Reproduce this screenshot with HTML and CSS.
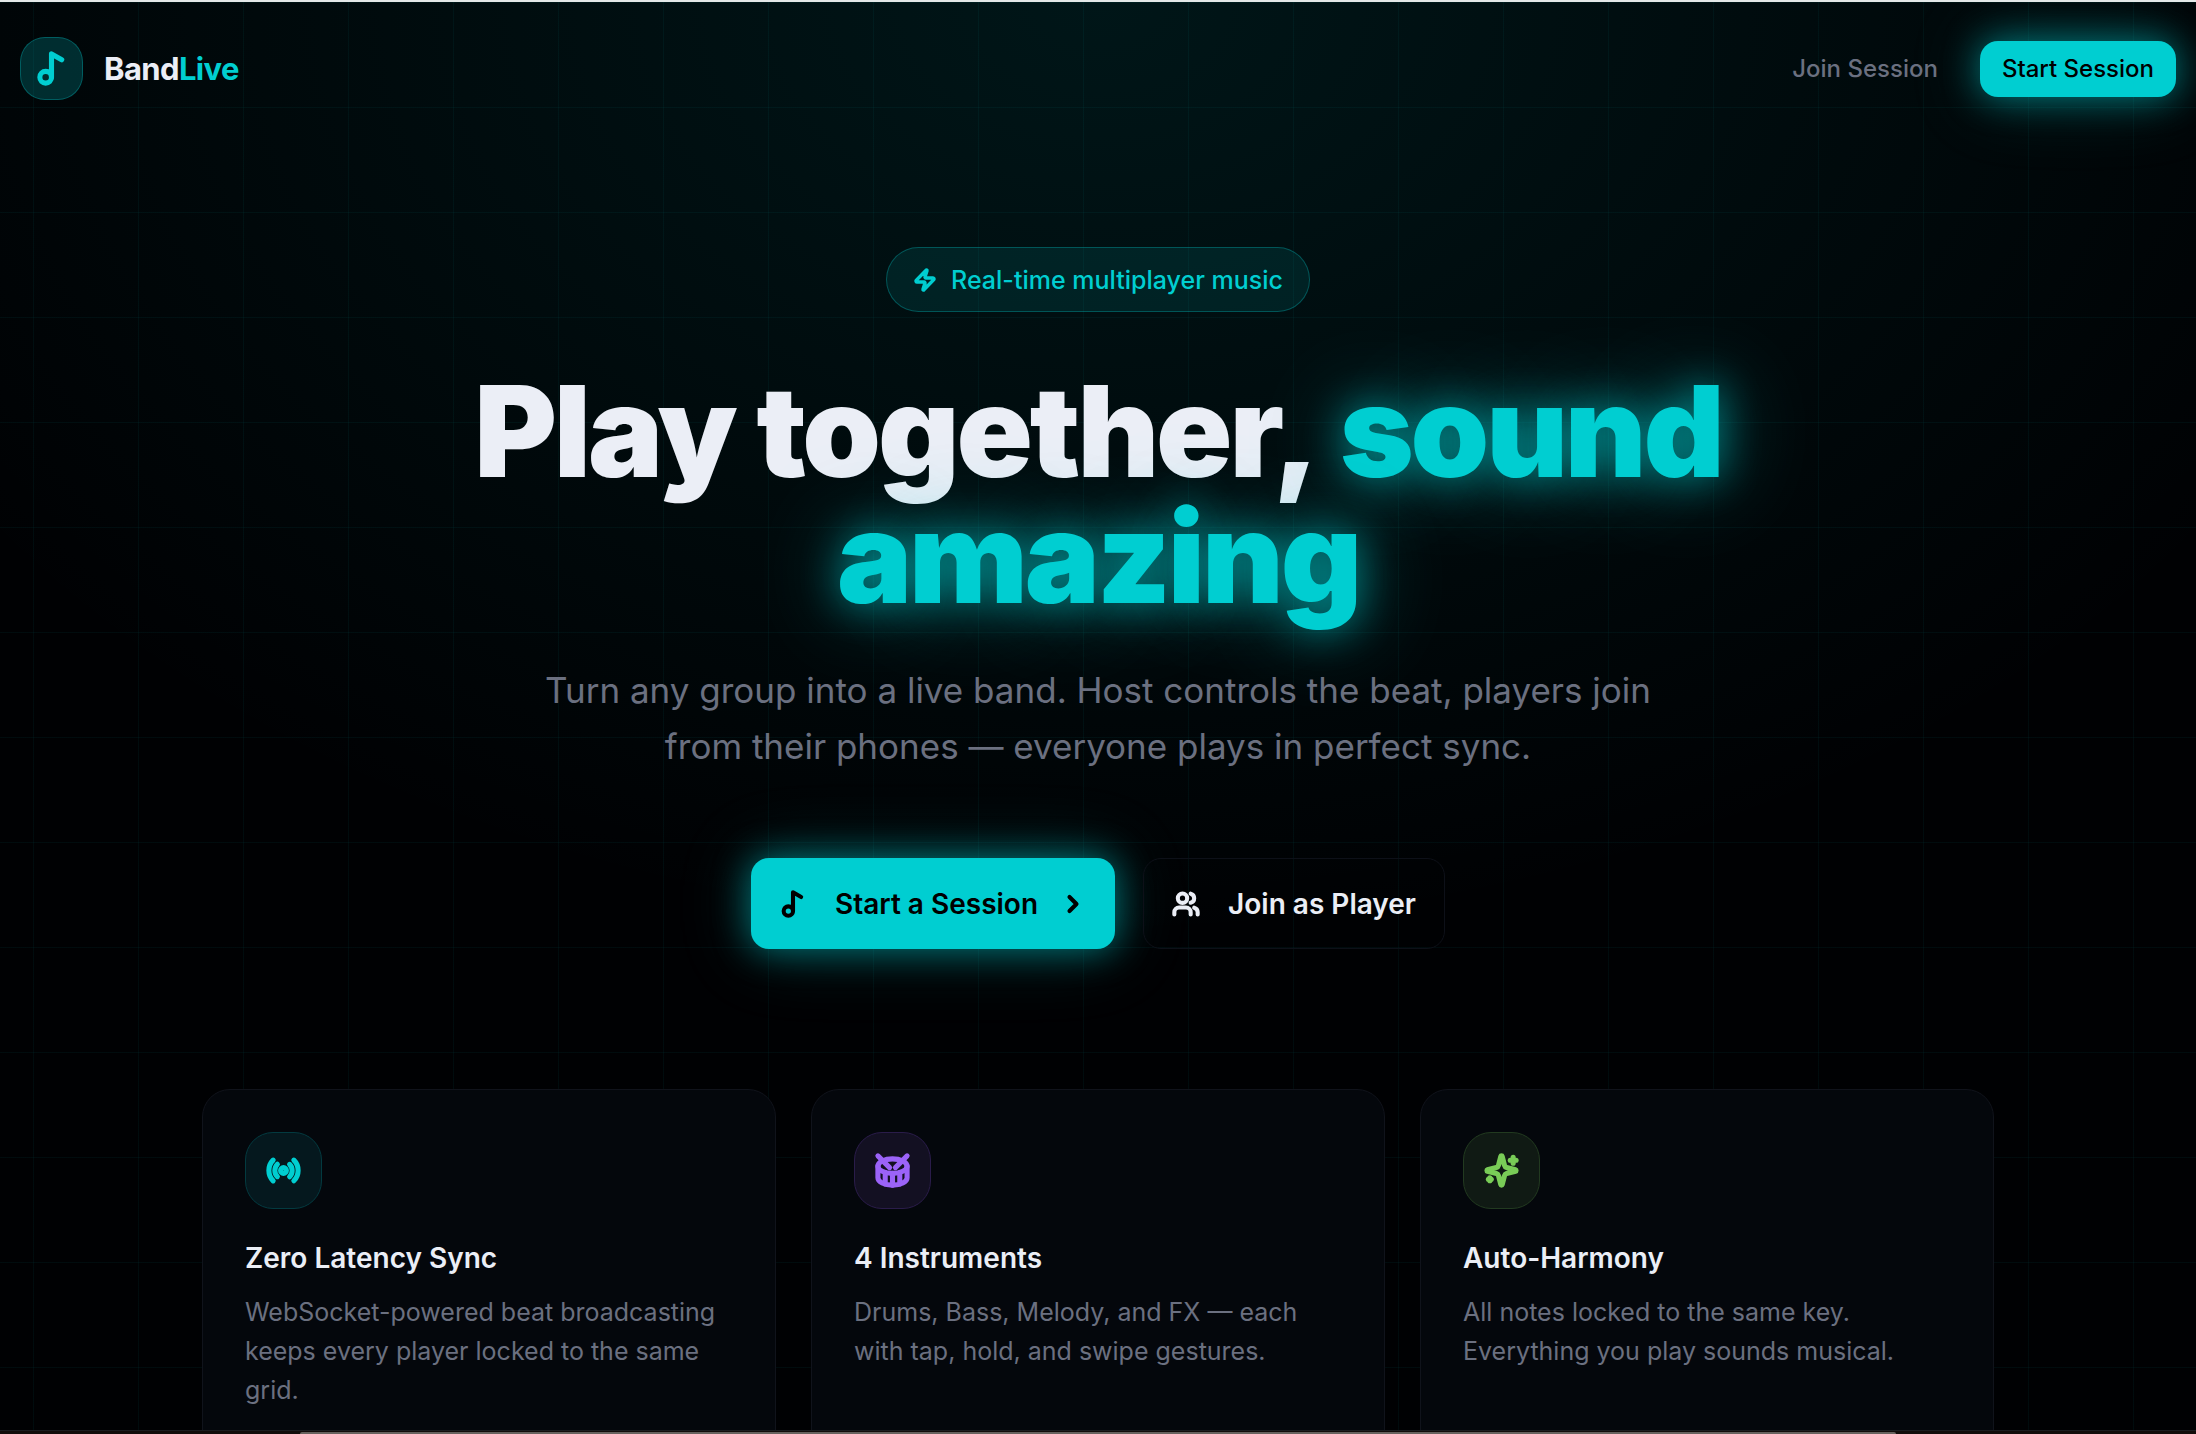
FILE: index.html
```html
<!DOCTYPE html>
<html lang="en">
<head>
<meta charset="utf-8">
<meta name="viewport" content="width=device-width, initial-scale=1">
<title>BandLive</title>
<link rel="stylesheet" href="styles.css">
</head>
<body>
<div class="page">
  <div class="screen">
    <header class="topbar">
      <a class="brand" href="#">
        <span class="brand-mark"><svg class="icon icon-lg" viewBox="0 0 24 24"><circle cx="8" cy="18" r="4"/><path d="M12 18V2l7 4"/></svg></span>
        <span class="brand-name">Band<span class="accent">Live</span></span>
      </a>
      <nav class="topnav">
        <a class="nav-link" href="#">Join Session</a>
        <button class="btn-small" type="button">Start Session</button>
      </nav>
    </header>
    <main>
      <section class="hero">
        <p class="badge"><svg class="icon icon-sm" viewBox="0 0 24 24"><path d="M4 14a1 1 0 0 1-.78-1.63l9.9-10.2a.5.5 0 0 1 .86.46l-1.92 6.02A1 1 0 0 0 13 10h7a1 1 0 0 1 .78 1.63l-9.9 10.2a.5.5 0 0 1-.86-.46l1.92-6.02A1 1 0 0 0 11 14z"/></svg>Real-time multiplayer music</p>
        <h1 class="headline">Play together, <span class="glow">sound amazing</span></h1>
        <p class="lead">Turn any group into a live band. Host controls the beat, players join from their phones — everyone plays in perfect sync.</p>
        <div class="actions">
          <button class="btn btn-primary" type="button"><svg class="icon icon-md" viewBox="0 0 24 24"><circle cx="8" cy="18" r="4"/><path d="M12 18V2l7 4"/></svg><span class="btn-label">Start a Session</span><svg class="icon icon-md" viewBox="0 0 24 24"><path d="m9 18 6-6-6-6"/></svg></button>
          <button class="btn btn-outline" type="button"><svg class="icon icon-md" viewBox="0 0 24 24"><path d="M16 21v-2a4 4 0 0 0-4-4H6a4 4 0 0 0-4 4v2"/><circle cx="9" cy="7" r="4"/><path d="M22 21v-2a4 4 0 0 0-3-3.870"/><path d="M16 3.130a4 4 0 0 1 0 7.750"/></svg><span class="btn-label">Join as Player</span></button>
        </div>
      </section>
      <section class="features">
        <article class="card">
          <span class="tile tile-cyan"><svg class="icon icon-lg" viewBox="0 0 24 24"><path d="M4.900 19.100C1 15.200 1 8.800 4.900 4.900"/><path d="M7.800 16.200c-2.300-2.300-2.300-6.100 0-8.500"/><circle cx="12" cy="12" r="2"/><path d="M16.200 7.800c2.300 2.300 2.300 6.100 0 8.500"/><path d="M19.100 4.900C23 8.800 23 15.100 19.100 19"/></svg></span>
          <h2 class="card-title">Zero Latency Sync</h2>
          <p class="card-text">WebSocket-powered beat broadcasting keeps every player locked to the same grid.</p>
        </article>
        <article class="card">
          <span class="tile tile-violet"><svg class="icon icon-lg" viewBox="0 0 24 24"><path d="m2 2 8 8"/><path d="m22 2-8 8"/><ellipse cx="12" cy="9" rx="10" ry="5"/><path d="M7 13.400v7.900"/><path d="M12 14v8"/><path d="M17 13.400v7.900"/><path d="M2 9v8a10 5 0 0 0 20 0V9"/></svg></span>
          <h2 class="card-title">4 Instruments</h2>
          <p class="card-text">Drums, Bass, Melody, and FX — each with tap, hold, and swipe gestures.</p>
        </article>
        <article class="card">
          <span class="tile tile-green"><svg class="icon icon-lg" viewBox="0 0 24 24"><path d="M9.937 15.500A2 2 0 0 0 8.500 14.063l-6.135-1.582a.5.5 0 0 1 0-.962L8.500 9.936A2 2 0 0 0 9.937 8.500l1.582-6.135a.5.5 0 0 1 .963 0L14.063 8.500A2 2 0 0 0 15.500 9.937l6.135 1.581a.5.5 0 0 1 0 .964L15.500 14.063a2 2 0 0 0-1.437 1.437l-1.582 6.135a.5.5 0 0 1-.963 0z"/><path d="M20 3v4"/><path d="M22 5h-4"/><path d="M4 17v2"/><path d="M5 18H3"/></svg></span>
          <h2 class="card-title">Auto-Harmony</h2>
          <p class="card-text">All notes locked to the same key. Everything you play sounds musical.</p>
        </article>
      </section>
    </main>
  </div>
  <div class="edge"><div class="edge-line"></div></div>
</div>
</body>
</html>
```
FILE: styles.css
```css
* { box-sizing: border-box; }

html, body { margin: 0; height: 100%; background: #000; }

body {
  font-family: Inter, "Liberation Sans", sans-serif;
  color: #ebeef6;
  overflow: hidden;
}

h1, h2, p { margin: 0; }
a { color: inherit; text-decoration: none; }
button { font: inherit; border: 0; }

.page {
  display: flex;
  flex-direction: column;
  height: 100vh;
  border-top: 2px solid #e4e8e8;
}
.screen {
  flex: 1;
  min-height: 0;
  overflow: hidden;
  background-color: #000103;
  background-image:
    linear-gradient(rgba(0, 206, 209, 0.050) 1px, transparent 1px),
    linear-gradient(90deg, rgba(0, 206, 209, 0.050) 1px, transparent 1px),
    radial-gradient(ellipse 62% 66% at 50% 0, rgba(0, 206, 209, 0.100), transparent);
  background-size: 105px 105px, 105px 105px, auto;
  background-position: 33px 0, 33px 0, 0 0;
}
.edge {
  height: 4px;
  padding: 1px 300px 0;
  border-top: 1px solid #1b1d20;
  background: #120d0b;
}
.edge-line { height: 2px; background: #67625e; border-radius: 2px 2px 0 0; }

.icon {
  flex: none;
  fill: none;
  stroke: currentColor;
  stroke-width: 3.5;
  stroke-linecap: round;
  stroke-linejoin: round;
  overflow: visible;
}
.icon-sm { width: 24px; height: 24px; }
.icon-md { width: 28px; height: 28px; }
.icon-lg { width: 35px; height: 35px; }

.topbar {
  display: flex;
  align-items: center;
  justify-content: space-between;
  padding: 35px 20px;
}
.brand { display: flex; align-items: center; gap: 21px; }
.brand-mark {
  display: grid;
  place-items: center;
  width: 63px;
  height: 63px;
  border: 1px solid rgba(0, 206, 209, 0.300);
  border-radius: 25px;
  background: rgba(0, 206, 209, 0.200);
  color: #00ced1;
}
.brand-name { font-size: 31px; font-weight: 700; letter-spacing: -0.02em; }
.accent { color: #00ced1; }
.topnav { display: flex; align-items: center; gap: 42px; font-size: 24px; font-weight: 500; }
.nav-link { color: #6b7080; }
.btn-small {
  height: 56px;
  padding: 0 22px;
  border-radius: 18px;
  background: #00ced1;
  color: #000;
  box-shadow: 0 0 35px rgba(0, 206, 209, 0.500), 0 0 70px rgba(0, 206, 209, 0.250);
}

.hero {
  display: flex;
  flex-direction: column;
  align-items: center;
  padding-top: 112px;
  text-align: center;
}
.badge {
  display: flex;
  align-items: center;
  gap: 14px;
  height: 65px;
  padding: 0 26px;
  border: 1px solid rgba(0, 206, 209, 0.300);
  border-radius: 33px;
  background: rgba(0, 206, 209, 0.100);
  color: #00ced1;
  font-size: 25px;
  font-weight: 500;
}
.headline {
  max-width: 1344px;
  margin-top: 56px;
  font-size: 126px;
  line-height: 126px;
  font-weight: 900;
  letter-spacing: -0.025em;
}
.glow {
  margin-left: 8px;
  color: #00ced1;
  text-shadow: 0 0 42px rgba(0, 206, 209, 0.650), 0 0 98px rgba(0, 206, 209, 0.450);
}
.lead {
  max-width: 1176px;
  margin-top: 42px;
  font-size: 35px;
  line-height: 56px;
  color: #6b7080;
}
.actions { display: flex; gap: 28px; margin-top: 84px; }
.btn {
  display: flex;
  align-items: center;
  gap: 21px;
  height: 91px;
  padding: 0 28px;
  border-radius: 18px;
  font-size: 28px;
  font-weight: 600;
}
.btn-label { padding-left: 7px; }
.btn-primary {
  background: #00ced1;
  color: #000;
  box-shadow: 0 0 35px rgba(0, 206, 209, 0.500), 0 0 70px rgba(0, 206, 209, 0.250);
}
.btn-outline {
  border: 1px solid #0d1018;
  background: transparent;
  color: #ebeef6;
}

.features {
  display: grid;
  grid-template-columns: repeat(3, 1fr);
  gap: 35px;
  max-width: 1792px;
  margin: 140px auto 0;
}
.card {
  min-height: 400px;
  padding: 42px;
  border: 1px solid #10131b;
  border-radius: 28px;
  background: #04070c;
}
.tile {
  display: grid;
  place-items: center;
  width: 77px;
  height: 77px;
  border: 1px solid;
  border-radius: 28px;
}
.tile-cyan { color: #00ced1; background: #05181e; border-color: #033a40; }
.tile-violet { color: #9b63f8; background: #131022; border-color: #2a1c4a; }
.tile-green { color: #79cc57; background: #101a14; border-color: #223a20; }
.card-title { margin-top: 31px; font-size: 28px; line-height: 36px; font-weight: 600; }
.card-text { margin-top: 17px; font-size: 25px; line-height: 39px; color: #6b7080; }
```
